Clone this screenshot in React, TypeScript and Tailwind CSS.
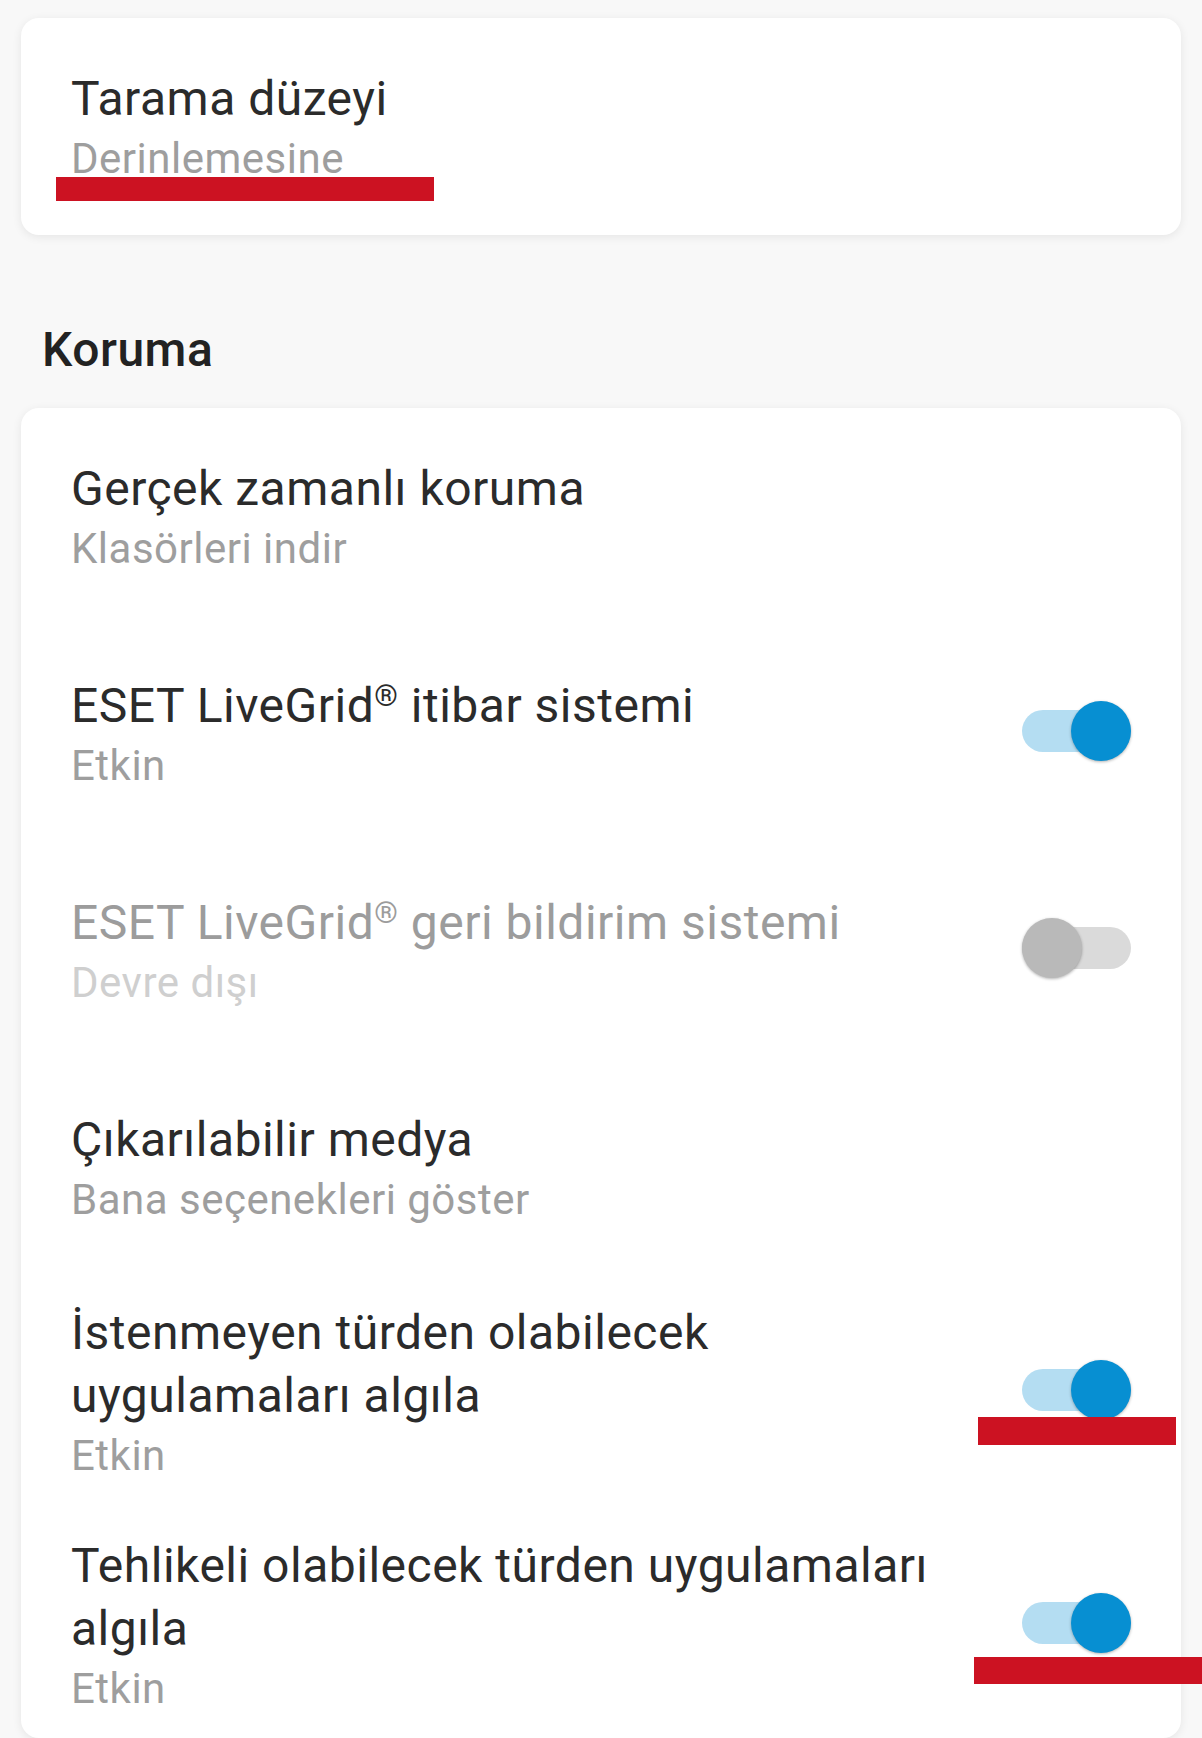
import type { ReactNode } from "react"

interface ToggleProps {
  on: boolean
  mark?: "short" | "long"
}

const Toggle = ({ on, mark }: ToggleProps) => {
  return (
    <div className="relative h-[60px] w-[109px] shrink-0 flex items-center -mt-[6px]">
      <div className={`h-[42px] w-full rounded-full ${on ? "bg-[#B4DDF2]" : "bg-[#DADADA]"}`} />
      <div
        className={`absolute top-0 size-[60px] rounded-full shadow-[0_1px_3px_rgba(0,0,0,0.3)] ${
          on ? "right-0 bg-[#078FD2]" : "left-0 bg-[#B9B9B9]"
        }`}
      />
      {mark === "short" && <div className="absolute left-[-44px] top-[57px] h-[28px] w-[198px] bg-[#CC1222]" />}
      {mark === "long" && <div className="absolute left-[-48px] top-[64px] h-[27px] w-[240px] bg-[#CC1222]" />}
    </div>
  )
}

interface RowProps {
  title: ReactNode
  subtitle: string
  disabled?: boolean
  toggle?: ReactNode
  last?: boolean
}

const Row = ({ title, subtitle, disabled, toggle, last }: RowProps) => {
  return (
    <div className={`flex items-center min-h-[217px] pl-[50px] pr-[50px] pt-[25px] ${last ? "pb-[21px]" : "pb-[25px]"}`}>
      <div className="flex-1 min-w-0">
        <div
          className={`text-[48px] leading-[63px] tracking-[0.5px] whitespace-nowrap ${
            disabled ? "text-[#9C9C9C]" : "text-[#2B2B2B]"
          }`}
        >
          {title}
        </div>
        <div className={`text-[42px] leading-[57px] tracking-[0.5px] ${disabled ? "text-[#CFCFCF]" : "text-[#9E9E9E]"}`}>
          {subtitle}
        </div>
      </div>
      {toggle}
    </div>
  )
}

const Reg = () => <span className="text-[30px] leading-[0] align-[16px]">®</span>

export default function App() {
  return (
    <div className="min-h-screen bg-[#F8F8F8] px-[21px] pt-[18px] pb-10 font-['Roboto',sans-serif]">
      <div className="relative rounded-[18px] bg-white shadow-[0_2px_10px_rgba(0,0,0,0.08)]">
        <Row title="Tarama düzeyi" subtitle="Derinlemesine" />
        <div className="absolute left-[35px] top-[159px] h-[24px] w-[378px] bg-[#CC1222]" />
      </div>

      <h2 className="mt-[83px] mb-[27px] pl-[21px] text-[48px] leading-[63px] tracking-[0.5px] font-medium text-[#222222]">
        Koruma
      </h2>

      <div className="rounded-[18px] bg-white shadow-[0_2px_10px_rgba(0,0,0,0.08)]">
        <Row title="Gerçek zamanlı koruma" subtitle="Klasörleri indir" />
        <Row
          title={
            <>
              ESET LiveGrid<Reg /> itibar sistemi
            </>
          }
          subtitle="Etkin"
          toggle={<Toggle on />}
        />
        <Row
          title={
            <>
              ESET LiveGrid<Reg /> geri bildirim sistemi
            </>
          }
          subtitle="Devre dışı"
          disabled
          toggle={<Toggle on={false} />}
        />
        <Row title="Çıkarılabilir medya" subtitle="Bana seçenekleri göster" />
        <Row
          title={
            <>
              İstenmeyen türden olabilecek
              <br />
              uygulamaları algıla
            </>
          }
          subtitle="Etkin"
          toggle={<Toggle on mark="short" />}
        />
        <Row
          title={
            <>
              Tehlikeli olabilecek türden uygulamaları
              <br />
              algıla
            </>
          }
          subtitle="Etkin"
          toggle={<Toggle on mark="long" />}
          last
        />
      </div>
    </div>
  )
}
